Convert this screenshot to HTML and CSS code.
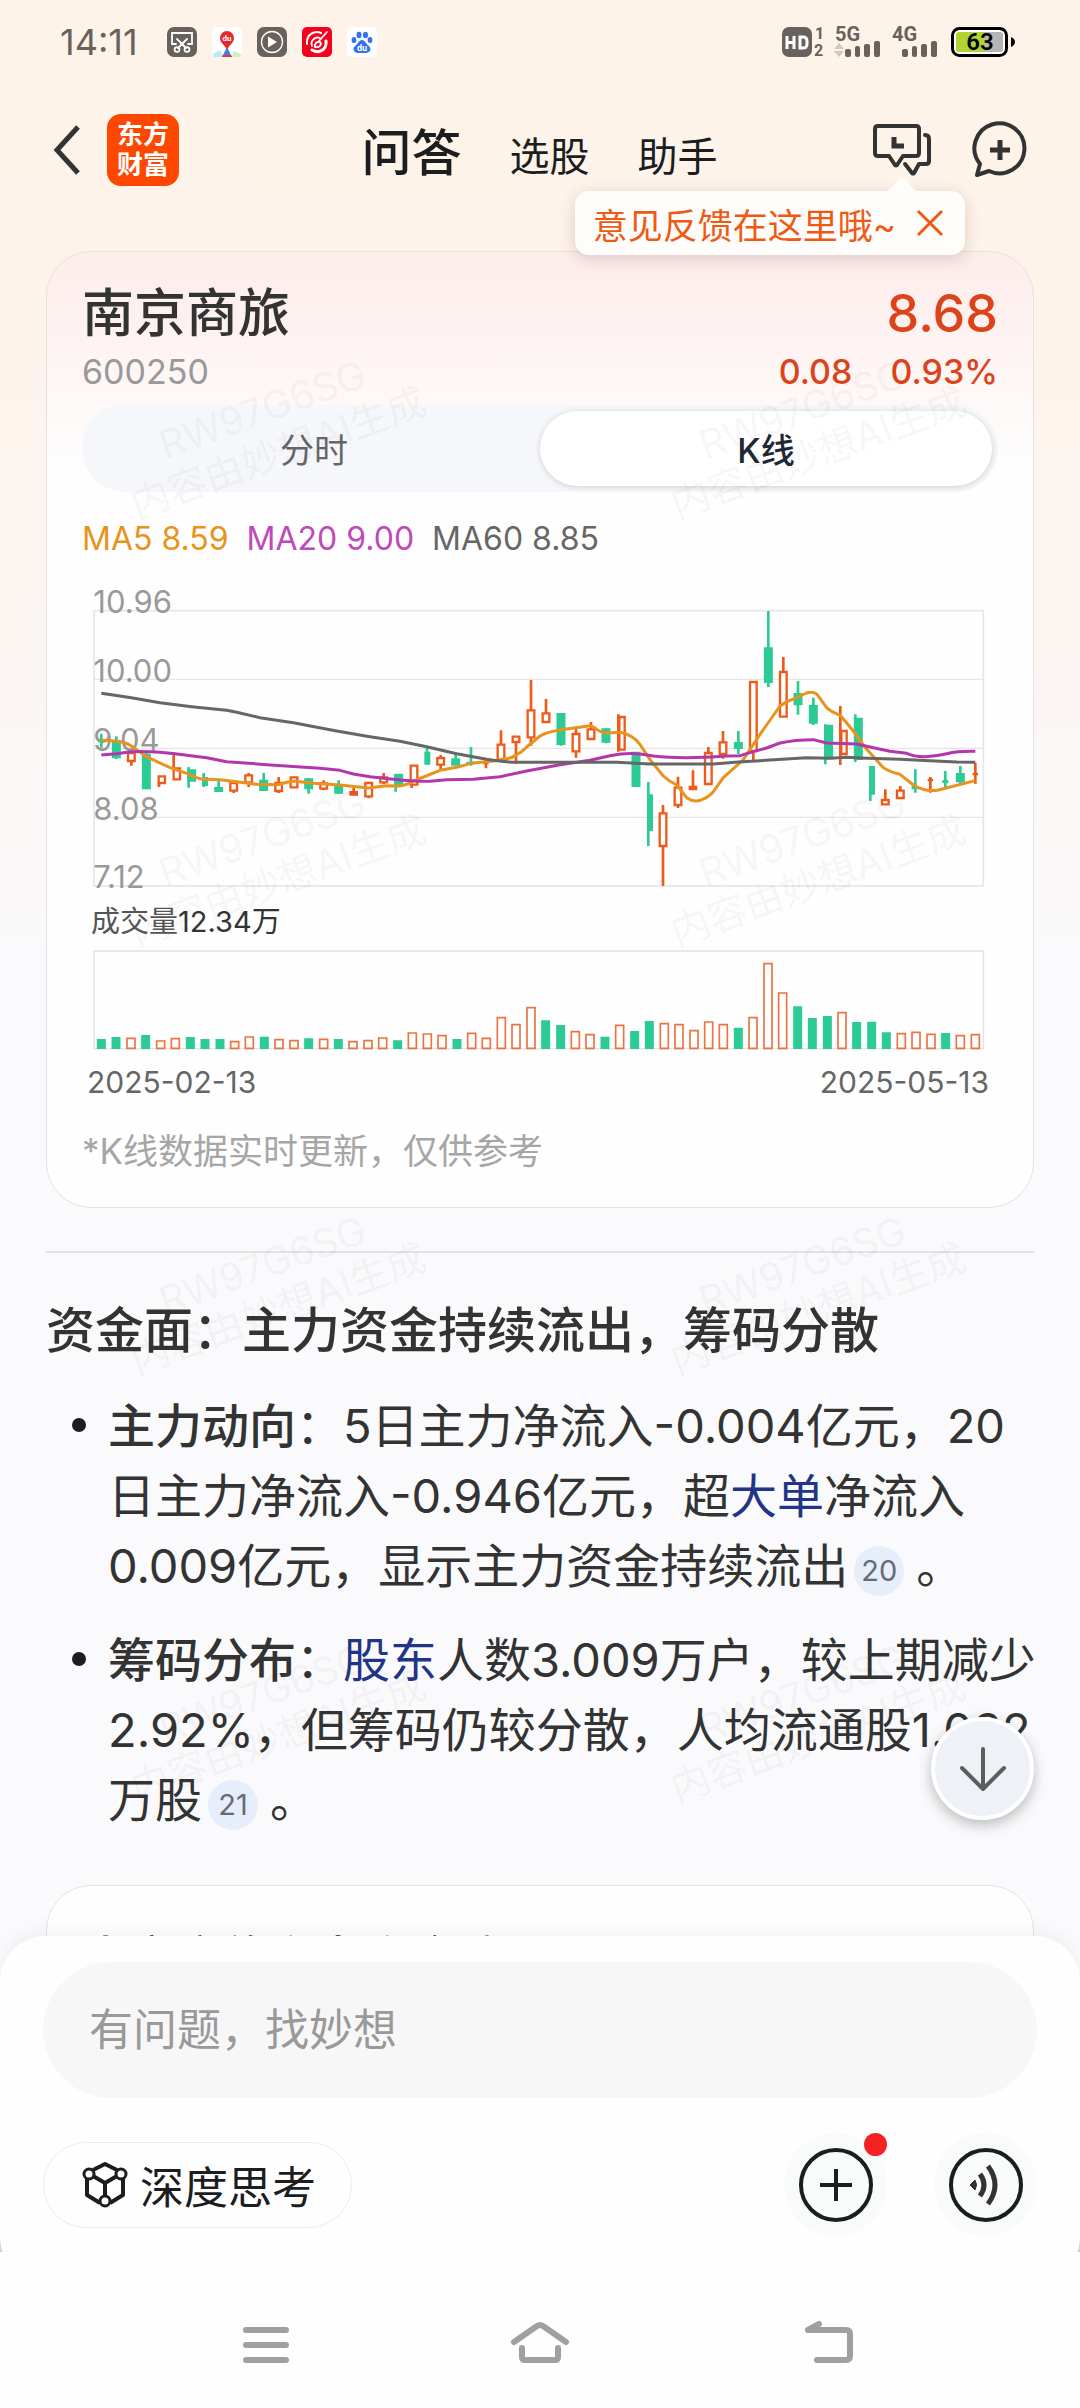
FILE: index.html
```html
<!DOCTYPE html>
<html lang="zh-CN">
<head>
<meta charset="utf-8">
<meta name="viewport" content="width=device-width, initial-scale=1">
<title>问答</title>
<link rel="stylesheet" href="styles.css">
</head>
<body>
<div class="screen">
  <div class="watermarks" aria-hidden="true">
    <p>RW97G6SG<br>内容由妙想AI生成</p><p>RW97G6SG<br>内容由妙想AI生成</p>
    <p>RW97G6SG<br>内容由妙想AI生成</p><p>RW97G6SG<br>内容由妙想AI生成</p>
    <p>RW97G6SG<br>内容由妙想AI生成</p><p>RW97G6SG<br>内容由妙想AI生成</p>
    <p>RW97G6SG<br>内容由妙想AI生成</p><p>RW97G6SG<br>内容由妙想AI生成</p>
  </div>

  <div class="status">
    <div class="status-left">
      <span class="clock">14:11</span>
      <svg width="30" height="30" viewBox="0 0 30 30"><rect width="30" height="30" rx="7" fill="#69625c"/><g fill="none" stroke="#fff" stroke-width="1.8" stroke-linecap="round"><path d="M9 17H5V6h20v11h-4M10 12l9 9M20 12l-9 9"/><circle cx="10" cy="22.500" r="2.400"/><circle cx="20" cy="22.500" r="2.400"/></g></svg>
      <svg width="30" height="30" viewBox="0 0 30 30"><rect width="30" height="30" rx="5" fill="#fff"/><path d="M1 27l7-4 4 7H2z" fill="#bfe9f2"/><path d="M21 24l8 3-1 3h-8z" fill="#cdeec4"/><path d="M15 20l5 10H10z" fill="#3f7fe0"/><path d="M11 28h8l1 2H10z" fill="#e33"/><path d="M15 23c-1-4-7-7-7-12a7 7 0 0 1 14 0c0 5-6 8-7 12z" fill="#e8272f"/><text x="15" y="14" class="pin-text">du</text></svg>
      <svg width="30" height="30" viewBox="0 0 30 30"><rect width="30" height="30" rx="7" fill="#69625c"/><circle cx="15" cy="15" r="10.500" fill="none" stroke="#fff" stroke-width="1.300"/><path d="M11 9.500v11l9-5.500z" fill="#fff"/></svg>
      <svg width="30" height="30" viewBox="0 0 30 30"><rect width="30" height="30" rx="5" fill="#f5001d"/><g fill="none" stroke="#fff" stroke-linecap="round"><path d="M5 17C4 7 13 3 19 6" stroke-width="2"/><path d="M24 14c1 9-7 13-14 9" stroke-width="3"/><path d="M10 19c-2-5 3-10 8-8M13 20c5 1 7-3 5-5-3-1-6 2-5 5M25 5l-8 9" stroke-width="1.800"/></g></svg>
      <svg width="30" height="30" viewBox="0 0 30 30"><rect width="30" height="30" rx="5" fill="#fff"/><g fill="#2f73ee"><ellipse cx="7" cy="13" rx="2.400" ry="3"/><ellipse cx="12" cy="8" rx="2.500" ry="3.200"/><ellipse cx="18.500" cy="8" rx="2.500" ry="3.200"/><ellipse cx="23" cy="13" rx="2.400" ry="3"/><path d="M15 13c-3 0-4 4-7 6-3 3-1 7 3 7h8c4 0 6-4 3-7-3-2-4-6-7-6z"/></g><text x="15" y="24" class="paw-text">du</text></svg>
    </div>
    <svg class="status-right" width="234" height="30" viewBox="0 0 234 30">
      <g fill="#69625c">
        <rect width="30" height="30" rx="7"/>
        <path d="M5 9v13M12 9v13M5 15.500h7M18 10v11h3q4 0 4-4v-3q0-4-4-4z" fill="none" stroke="#fff" stroke-width="3"/>
        <text x="33" y="12" class="sim">1</text><text x="32" y="29" class="sim">2</text>
        <text x="53" y="14" class="net">5G</text><text x="110" y="14" class="net">4G</text>
        <path d="M52 22l5-6 5 6zM52 24h10l-5 6z" opacity=".3"/>
        <rect x="63" y="22" width="6" height="8" rx="2"/><rect x="73" y="19" width="5" height="11" rx="2"/><rect x="82" y="17" width="6" height="13" rx="2"/><rect x="92" y="14" width="6" height="16" rx="2"/>
        <rect x="120" y="22" width="6" height="8" rx="2"/><rect x="130" y="19" width="5" height="11" rx="2"/><rect x="139" y="17" width="6" height="13" rx="2"/><rect x="149" y="14" width="6" height="16" rx="2"/>
      </g>
      <rect x="170.500" y="1.500" width="54" height="27" rx="7" fill="#fff" stroke="#000" stroke-width="3"/>
      <path d="M177 5h26v20h-26a3 3 0 0 1-3-3V8a3 3 0 0 1 3-3z" fill="#b2d235"/>
      <path d="M203 5h15a3 3 0 0 1 3 3v14a3 3 0 0 1-3 3h-15z" fill="#b5b5b5"/>
      <text x="198" y="23" class="battery">63</text>
      <path d="M229 10q4 2 4 5t-4 5z"/>
    </svg>
  </div>

  <header class="header">
    <div class="header-left">
      <button class="icon-button" aria-label="返回"><svg width="28" height="52" viewBox="0 0 28 52"><path d="M26 3L5 26l21 23" fill="none" stroke="#333" stroke-width="5"/></svg></button>
      <a class="logo" href="#">东方<br>财富</a>
    </div>
    <nav class="tabs">
      <button class="tab tab-active">问答</button>
      <button class="tab">选股</button>
      <button class="tab">助手</button>
    </nav>
    <div class="header-right">
      <button class="icon-button" aria-label="历史对话"><svg width="60" height="54" viewBox="0 0 60 54"><g fill="none" stroke="#333" stroke-width="4" stroke-linejoin="round" stroke-linecap="round"><path d="M6 3h38q3 0 3 3v24q0 3-3 3h-13l-6 9q-1 1-2 0l-6-9H6q-3 0-3-3V6q0-3 3-3z"/><path d="M53 12q4 0 4 4v22q0 3-3 3h-7l-5 9q-1 1-2 0l-7-9"/></g><path d="M22 14v9h10" fill="none" stroke="#333" stroke-width="5"/></svg></button>
      <button class="icon-button" aria-label="新建对话"><svg width="54" height="56" viewBox="0 0 54 56"><path d="M7 42a25 25 0 1 1 9 7L4 53z" fill="none" stroke="#333" stroke-width="4" stroke-linejoin="round"/><path d="M27 18v20M17 28h20" stroke="#333" stroke-width="5"/></svg></button>
      <div class="tooltip">
        <span>意见反馈在这里哦~</span>
        <button class="icon-button" aria-label="关闭"><svg width="28" height="28" viewBox="0 0 28 28"><path d="M2 2l24 24M26 2L2 26" stroke="#ee5a12" stroke-width="3"/></svg></button>
      </div>
    </div>
  </header>

  <main class="content">
    <section class="card stock">
      <div class="quote">
        <h2 class="name">南京商旅</h2>
        <span class="price">8.68</span>
      </div>
      <div class="quote quote-small">
        <span class="code">600250</span>
        <span class="change"><span>0.08</span><span>0.93%</span></span>
      </div>
      <div class="segment">
        <button class="segment-item">分时</button>
        <button class="segment-item segment-on">K线</button>
      </div>
      <div class="legend"><span class="ma5">MA5 8.59</span><span class="ma20">MA20 9.00</span><span class="ma60">MA60 8.85</span></div>

      <svg class="chart" viewBox="0 0 2748 975" role="img" aria-label="K线图">
        <g stroke="#e6e6e6" fill="none">
          <rect x="36" y="119" width="2668" height="826" stroke-width="5"/>
          <path d="M36 325H2704M36 532H2704M36 739H2704" stroke-width="4"/>
        </g>
        <g class="axis">
          <text x="34" y="126">10.96</text><text x="34" y="333">10.00</text><text x="34" y="539">9.04</text><text x="34" y="746">8.08</text><text x="34" y="952">7.12</text>
        </g>
        <g stroke="#2ccb95">
          <path stroke-width="8" d="M58 488V530M103 496V564M193 545V655M320 588V650M365 606V648M410 630V660M545 606V655M680 622V668M770 628V669M941 610V662M1035 530V575M1121 548V580M1167 528V584M1437 426V524M1572 472V517M1699 633V825M1969 480V550M2059 120V348M2148 330V431M2194 380V462M2230 460V580M2320 430V573M2365 585V690M2500 595V665M2590 600V648M2635 585V640"/>
          <path stroke-width="27" d="M103 512V562M193 548V655M329 595V632M410 648V663M545 626V660M680 622V655M770 642V668M950 608V645M1121 562V584M1167 572V580M1437 426V522M1572 472V515M1662 542V648M1969 513V534M2059 229V336M2148 366V403M2194 402V458M2240 461V565M2329 440V567M2635 606V634"/>
          <path stroke-width="18" d="M58 505V514M369 618V645M1036 542V581M1704 670V780M2370 585V671M2498 645V655M2590 627V636"/>
        </g>
        <g stroke="#ee5a18" fill="none">
          <path stroke-width="8" d="M148 570V584M231 636V648M275 545V592M455 658V666M500 606V648M590 618V666M725 628V658M815 650V672M860 677V682M905 606V640M989 640V651M1076 552V596M1212 565V592M1257 478V520M1302 514V578M1347 327V417M1347 500V524M1392 384V426M1482 474V488M1482 542V560M1527 453V474M1609 430V542M1743 702V726M1743 826V945M1788 617V650M1788 702V711M1833 598V656M1879 528V546M1923 480V513M1923 550V563M2014 540V569M2104 258V302M2275 405V582M2410 655V686M2455 645V658M2545 618V665M2680 575V638M2672 609H2688M2537 627H2553M1204 576H1220"/>
          <path stroke-width="7" fill="#fff" d="M138 546h20V570h-20zM230 616h19V636h-19zM275 592h19V625h-19zM445 636h20V659h-20zM490 613h20V634h-20zM580 636h20V660h-20zM626 619h20V649h-20zM715 637h20V653h-20zM850 636h20V676h-20zM895 619h20V634h-20zM986 584h20V641h-20zM1066 561h20V581h-20zM1247 521h20V567h-20zM1292 497h20V513h-20zM1337 418h20V499h-20zM1382 427h20V453h-20zM1472 489h20V541h-20zM1517 475h20V504h-20zM1612 438h16V536h-16zM1733 727h20V825h-20zM1778 650h20V702h-20zM1869 546h20V639h-20zM1913 514h20V549h-20zM2004 333h20V540h-20zM2094 303h20V437h-20zM2278 480h16V549h-16zM2400 687h20V700h-20zM2445 659h20V681h-20z"/>
          <path stroke-width="14" d="M802 667h26M1820 651h26"/>
        </g>
        <g fill="none" stroke-width="9" stroke-linejoin="round">
          <path stroke="#e8931e" d="M58 508L104 510Q130 513 148 525L193 557L264 590L314 607Q350 625 368 625L414 626L464 632L524 640L589 641Q620 632 634 630L694 637L774 642L860 651L914 644L954 645Q980 640 995 630L1074 598L1124 589L1167 577L1234 570L1264 565Q1290 562 1302 552Q1320 544 1334 528L1374 495Q1390 484 1437 476L1524 464Q1530 464 1549 478Q1560 486 1574 486L1614 484Q1650 490 1674 520L1704 566L1744 615Q1760 630 1784 642L1814 680Q1839 698 1864 684Q1880 678 1894 662L1924 620L1984 566L2034 490L2094 405Q2110 392 2134 384L2174 366Q2195 360 2205 370L2234 410Q2250 425 2274 432L2314 480L2354 535L2404 590Q2420 602 2454 610L2494 642Q2530 664 2569 657L2680 629"/>
          <path stroke="#b436ad" d="M58 552L103 548L148 542Q200 541 234 544L279 548L374 560L434 572L554 581L714 592L774 598L814 609L864 617L934 625Q1000 632 1044 631L1094 626L1174 625L1254 617L1334 600L1434 581L1524 568L1584 554Q1650 540 1714 555Q1800 565 1934 555L1974 554L2014 542L2054 531L2094 516Q2140 506 2194 506L2234 516L2324 519L2374 530L2424 541L2474 547Q2500 558 2530 557Q2560 556 2594 548Q2630 540 2680 541"/>
          <path stroke="#666" d="M58 367L148 380L234 395L329 407L434 418L464 424L534 440L634 455L764 480L864 497L954 511L1034 527L1124 548L1214 565Q1270 574 1304 574H1604L1704 579H1894L1969 573L2034 569L2174 560L2244 562L2294 559L2334 561L2454 565L2544 569L2624 573L2680 574"/>
        </g>
      </svg>

      <p class="volume"><span>成交量</span>12.34万</p>
      <svg class="chart" viewBox="0 0 2748 318" role="img" aria-label="成交量图">
        <rect x="36" y="15" width="2668" height="293" stroke="#e6e6e6" stroke-width="5" fill="none"/>
        <path stroke="#2ccb95" stroke-width="27" d="M58 309V279M102 309V273M191 309V267M325 309V273M369 309V279M414 309V279M547 309V272M680 309V277M769 309V279M947 309V283M1125 309V279M1391 309V223M1436 309V237M1569 309V272M1658 309V255M1702 309V225M1969 309V245M2147 309V181M2191 309V216M2236 309V210M2324 309V228M2369 309V227M2413 309V259M2591 309V261"/>
        <path stroke="#ea7440" stroke-width="5" fill="#fff" d="M135 307V277h24V307zM224 307V285h24V307zM268 307V278h24V307zM446 307V287h24V307zM490 307V273h24V307zM579 307V281h24V307zM624 307V284h24V307zM713 307V280h24V307zM801 307V287h24V307zM846 307V284h24V307zM890 307V276h24V307zM979 307V261h24V307zM1024 307V264h24V307zM1068 307V269h24V307zM1157 307V262h24V307zM1201 307V277h24V307zM1246 307V215h24V307zM1290 307V236h24V307zM1335 307V185h24V307zM1468 307V257h24V307zM1512 307V266h24V307zM1601 307V238h24V307zM1735 307V233h24V307zM1779 307V236h24V307zM1824 307V254h24V307zM1868 307V228h24V307zM1912 307V236h24V307zM2001 307V215h24V307zM2046 307V53h24V307zM2090 307V141h24V307zM2268 307V200h24V307zM2446 307V263h24V307zM2490 307V259h24V307zM2535 307V265h24V307zM2623 307V269h24V307zM2668 307V266h24V307z"/>
      </svg>
      <div class="dates"><time>2025-02-13</time><time>2025-05-13</time></div>
      <p class="note">*K线数据实时更新，仅供参考</p>
    </section>

    <hr class="rule">

    <h3 class="heading">资金面：主力资金持续流出，筹码分散</h3>
    <ul class="points">
      <li><p><strong>主力动向</strong>：5日主力净流入-0.004亿元，20日主力净流入-0.946亿元，超<a href="#">大单</a>净流入0.009亿元，显示主力资金持续流出<button class="cite">20</button>。</p></li>
      <li><p><strong>筹码分布</strong>：<a href="#">股东</a>人数3.009万户，较上期减少2.92%，但筹码仍较分散，人均流通股1.032万股<button class="cite">21</button>。</p></li>
    </ul>

    <section class="card flow">
      <h3 class="flow-title">南京商旅主力资金流入</h3>
    </section>
  </main>

  <footer class="dock">
    <div class="composer">
      <button class="scroll-down" aria-label="回到底部"><svg width="48" height="48" viewBox="0 0 48 48"><path d="M24 4v40M3 23l21 21 21-21" fill="none" stroke="#5b5d61" stroke-width="4" stroke-linecap="round" stroke-linejoin="round"/></svg></button>
      <input class="ask" type="text" aria-label="提问" placeholder="有问题，找妙想">
      <div class="tools">
        <button class="think">
          <svg width="46" height="48" viewBox="0 0 46 48"><g fill="none" stroke="#1c1d1f" stroke-width="4" stroke-linejoin="round"><path d="M11 9l12-6 12 6M5 18v16l13 8M41 18v16l-13 8M11 15l12 7 12-7M23 22v13"/><circle cx="7" cy="13" r="5" stroke-width="3"/><circle cx="39" cy="13" r="5" stroke-width="3"/><circle cx="23" cy="40" r="5" stroke-width="3"/></g></svg>
          <span>深度思考</span>
        </button>
        <div class="actions">
          <button class="round" aria-label="更多"><svg width="74" height="74" viewBox="0 0 74 74"><g fill="none" stroke="#1c1d1f" stroke-width="4"><circle cx="37" cy="37" r="35"/><path d="M37 21v32M21 37h32"/></g></svg><span class="dot"></span></button>
          <button class="round" aria-label="语音"><svg width="74" height="74" viewBox="0 0 74 74"><circle cx="37" cy="37" r="35" fill="none" stroke="#1c1d1f" stroke-width="4"/><path d="M21 37l5-5q3 5 0 10z" fill="#333" stroke="#333" stroke-width="1"/><path d="M31 26q8 11 0 22M39 18q14 19 0 38" fill="none" stroke="#333" stroke-width="5"/></svg></button>
        </div>
      </div>
    </div>
  </footer>

  <nav class="system-nav">
    <button class="icon-button" aria-label="最近任务"><svg width="90" height="48" viewBox="-15 0 90 48"><path d="M10 9h40M10 24h40M10 39h40"/></svg></button>
    <button class="icon-button" aria-label="主页"><svg width="90" height="48" viewBox="-15 0 90 48"><path d="M4 21L27 5q3-2 6 0L56 21M12 27v9q0 3 3 3h30q3 0 3-3v-9"/></svg></button>
    <button class="icon-button" aria-label="返回上级"><svg width="90" height="48" viewBox="-15 0 90 48"><path d="M35 3L24 9h38q4 0 4 4v22q0 4-4 4H33"/></svg></button>
  </nav>
</div>
</body>
</html>
```
FILE: styles.css
```css
* { box-sizing: border-box; }

body, h2, h3, p, ul { margin: 0; padding: 0; }

body {
  font-family: Inter, "Noto Sans CJK SC", sans-serif;
  color: #333;
}

button {
  margin: 0;
  padding: 0;
  border: 0;
  background: none;
  color: inherit;
  font: inherit;
}

a { color: #213488; text-decoration: none; }

svg { display: block; overflow: visible; }

.screen {
  position: relative;
  display: flex;
  flex-direction: column;
  height: 100vh;
  overflow: hidden;
  background: linear-gradient(#fef3e8 0, #fdf3ea 250px, #fcf5f0 560px, #faf9fb 960px, #fafafc 1100px);
}

.icon-button { display: block; flex: none; }

/* status bar */
.status {
  display: flex;
  justify-content: space-between;
  align-items: center;
  flex: none;
  height: 84px;
  padding: 0 64px 0 60px;
}

.status-left { display: flex; align-items: center; gap: 15px; }

.clock {
  min-width: 92px;
  color: #69625c;
  font-size: 36px;
  line-height: 48px;
}

.sim { font: bold 16px Roboto, sans-serif; }
.net { font: bold 20px Roboto, sans-serif; }
.battery { font: 600 24px Roboto, sans-serif; text-anchor: middle; }
.pin-text { font: bold 8px Roboto, sans-serif; text-anchor: middle; fill: #fff; }
.paw-text { font: bold 9px Roboto, sans-serif; text-anchor: middle; fill: #fff; }

/* header */
.header {
  display: grid;
  grid-template-columns: 1fr auto 1fr;
  align-items: center;
  flex: none;
  height: 132px;
  padding: 0 53px 0 52px;
}

.header-left { display: flex; align-items: center; gap: 27px; }

.logo {
  display: grid;
  place-content: center;
  width: 72px;
  height: 72px;
  border-radius: 14px;
  background: #fe4700;
  color: #fff;
  font-size: 26px;
  font-weight: 700;
  line-height: 30px;
}

.tabs {
  display: flex;
  align-items: baseline;
  gap: 48px;
  padding-top: 10px;
  color: #1c1d1f;
}

.tab { font-size: 40px; line-height: 60px; }
.tab-active { font-size: 50px; font-weight: 500; }

.header-right {
  position: relative;
  display: flex;
  justify-content: flex-end;
  align-items: center;
  gap: 41px;
}

.tooltip {
  position: absolute;
  z-index: 3;
  top: 69px;
  right: 62px;
  display: flex;
  align-items: center;
  gap: 20px;
  height: 64px;
  padding: 0 21px 0 18px;
  border-radius: 14px;
  background: #fffdfc;
  box-shadow: 0 4px 16px rgba(80, 40, 20, .18);
  color: #ee5a12;
  font-size: 35px;
  white-space: nowrap;
}

.tooltip::before {
  content: "";
  position: absolute;
  top: -14px;
  right: 48px;
  border: solid transparent;
  border-width: 0 15px 15px;
  border-bottom-color: #fffdfc;
}

/* conversation */
.content {
  flex: 1;
  min-height: 0;
  overflow: hidden;
  padding: 35px 46px 0;
}

.card {
  border: 1px solid #e4e2e4;
  border-radius: 45px;
  background: #fefefe;
}

.stock {
  padding: 32px 35px;
  background: linear-gradient(#fdecea 0, #fefefe 220px);
}

.quote {
  display: flex;
  justify-content: space-between;
  font-size: 52px;
  font-weight: 500;
  line-height: 60px;
}

.name { font-size: 52px; font-weight: 500; }
.price, .change { color: #dd431a; }

.quote-small {
  margin-top: 4px;
  font-size: 34px;
  line-height: 48px;
}

.code { color: #999; font-weight: 400; }
.change { display: flex; gap: 38px; }

.segment {
  display: grid;
  grid-template-columns: 1fr 1fr;
  height: 87px;
  margin-top: 9px;
  padding: 6px;
  border-radius: 44px;
  background: #f5f7fa;
}

.segment-item { border-radius: 38px; color: #666; font-size: 34px; }

.segment-on {
  background: #fff;
  box-shadow: 0 1px 6px rgba(0, 0, 0, .16);
  color: #1d2a35;
  font-weight: 500;
}

.legend {
  display: flex;
  gap: 18px;
  margin-top: 25px;
  font-size: 32px;
  line-height: 44px;
}

.ma5 { color: #e8931e; }
.ma20 { color: #be49b8; }
.ma60 { color: #666; }

.chart { width: 100%; height: auto; margin-top: 10px; }
.axis { fill: #999; font-size: 93px; }

.volume {
  margin-top: 6px;
  padding-left: 9px;
  font-size: 29px;
  line-height: 40px;
}

.volume span { color: #555; }
.volume + .chart { margin-top: 4px; }

.dates {
  display: flex;
  justify-content: space-between;
  margin-top: 10px;
  padding: 0 9px 0 5px;
  color: #666;
  font-size: 30px;
  line-height: 40px;
}

.note {
  margin-top: 25px;
  color: #a6a6a6;
  font-size: 35px;
  line-height: 48px;
}

.rule {
  height: 2px;
  margin: 43px 0;
  border: 0;
  background: #e2e2e5;
}

.heading {
  font-size: 49px;
  font-weight: 500;
  line-height: 70px;
}

.points {
  display: grid;
  gap: 24px;
  margin: 25px -6px 0 0;
  list-style: none;
  font-size: 47px;
  line-height: 70px;
}

.points li { display: grid; grid-template-columns: 62px 1fr; }

.points li::before {
  content: "";
  width: 14px;
  height: 14px;
  margin: 27px 0 0 26px;
  border-radius: 50%;
  background: #1c1d1f;
}

.points strong { font-weight: 500; }

.cite {
  width: 50px;
  height: 50px;
  margin: 0 12px 0 6px;
  border-radius: 50%;
  background: #e6eefc;
  color: #666b75;
  font-size: 29px;
  line-height: 50px;
  vertical-align: 2px;
}

.flow { margin-top: 50px; padding: 37px 35px; }
.flow-title { font-size: 47px; font-weight: 500; line-height: 70px; }

.watermarks {
  position: absolute;
  z-index: 1;
  top: 217px;
  left: 0;
  right: 0;
  display: grid;
  grid-template-columns: 1fr 1fr;
  grid-auto-rows: 428px;
  place-items: center;
  pointer-events: none;
  color: rgba(0, 0, 0, .055);
  font-size: 39px;
  line-height: 46px;
  text-align: center;
}

.watermarks p { transform: rotate(-20deg); }

/* composer */
.dock {
  position: relative;
  z-index: 2;
  flex: none;
  margin-top: -45px;
  background: linear-gradient(transparent 50%, #d9d9dc 50%);
}

.composer {
  position: relative;
  padding: 26px 43px 46px;
  border-radius: 45px;
  background: #fefefe;
  box-shadow: 0 -4px 20px rgba(0, 0, 0, .05);
}

.scroll-down {
  position: absolute;
  top: -219px;
  right: 46px;
  display: grid;
  place-items: center;
  width: 103px;
  height: 103px;
  border: 4px solid #fff;
  border-radius: 50%;
  background: #eef2f7;
  box-shadow: 0 5px 14px rgba(0, 0, 0, .25);
}

.ask {
  display: block;
  width: 100%;
  height: 136px;
  padding: 0 46px;
  border: 0;
  border-radius: 68px;
  background: #f7f7f7;
  font: inherit;
  font-size: 44px;
}

.ask::placeholder { color: #999; opacity: 1; }

.tools {
  display: flex;
  justify-content: space-between;
  align-items: center;
  margin-top: 35px;
}

.think {
  display: flex;
  align-items: center;
  gap: 12px;
  height: 86px;
  padding: 0 35px 0 38px;
  border: 1px solid #ececec;
  border-radius: 43px;
  color: #1c1d1f;
  font-size: 44px;
}

.actions { display: flex; gap: 47px; }

.round {
  position: relative;
  display: grid;
  place-items: center;
  width: 103px;
  height: 103px;
  border-radius: 50%;
  background: #f9fafa;
}

.dot {
  position: absolute;
  top: 0;
  right: 0;
  width: 23px;
  height: 23px;
  border-radius: 50%;
  background: #f52222;
}

.system-nav {
  position: relative;
  z-index: 3;
  display: grid;
  grid-template-columns: 1fr 1fr 1fr;
  justify-items: center;
  flex: none;
  margin-top: -30px;
  padding: 69px 12% 39px;
  background: #fefefe;
  fill: none;
  stroke: #a0a0a0;
  stroke-width: 6;
  stroke-linecap: round;
  stroke-linejoin: round;
}
```
